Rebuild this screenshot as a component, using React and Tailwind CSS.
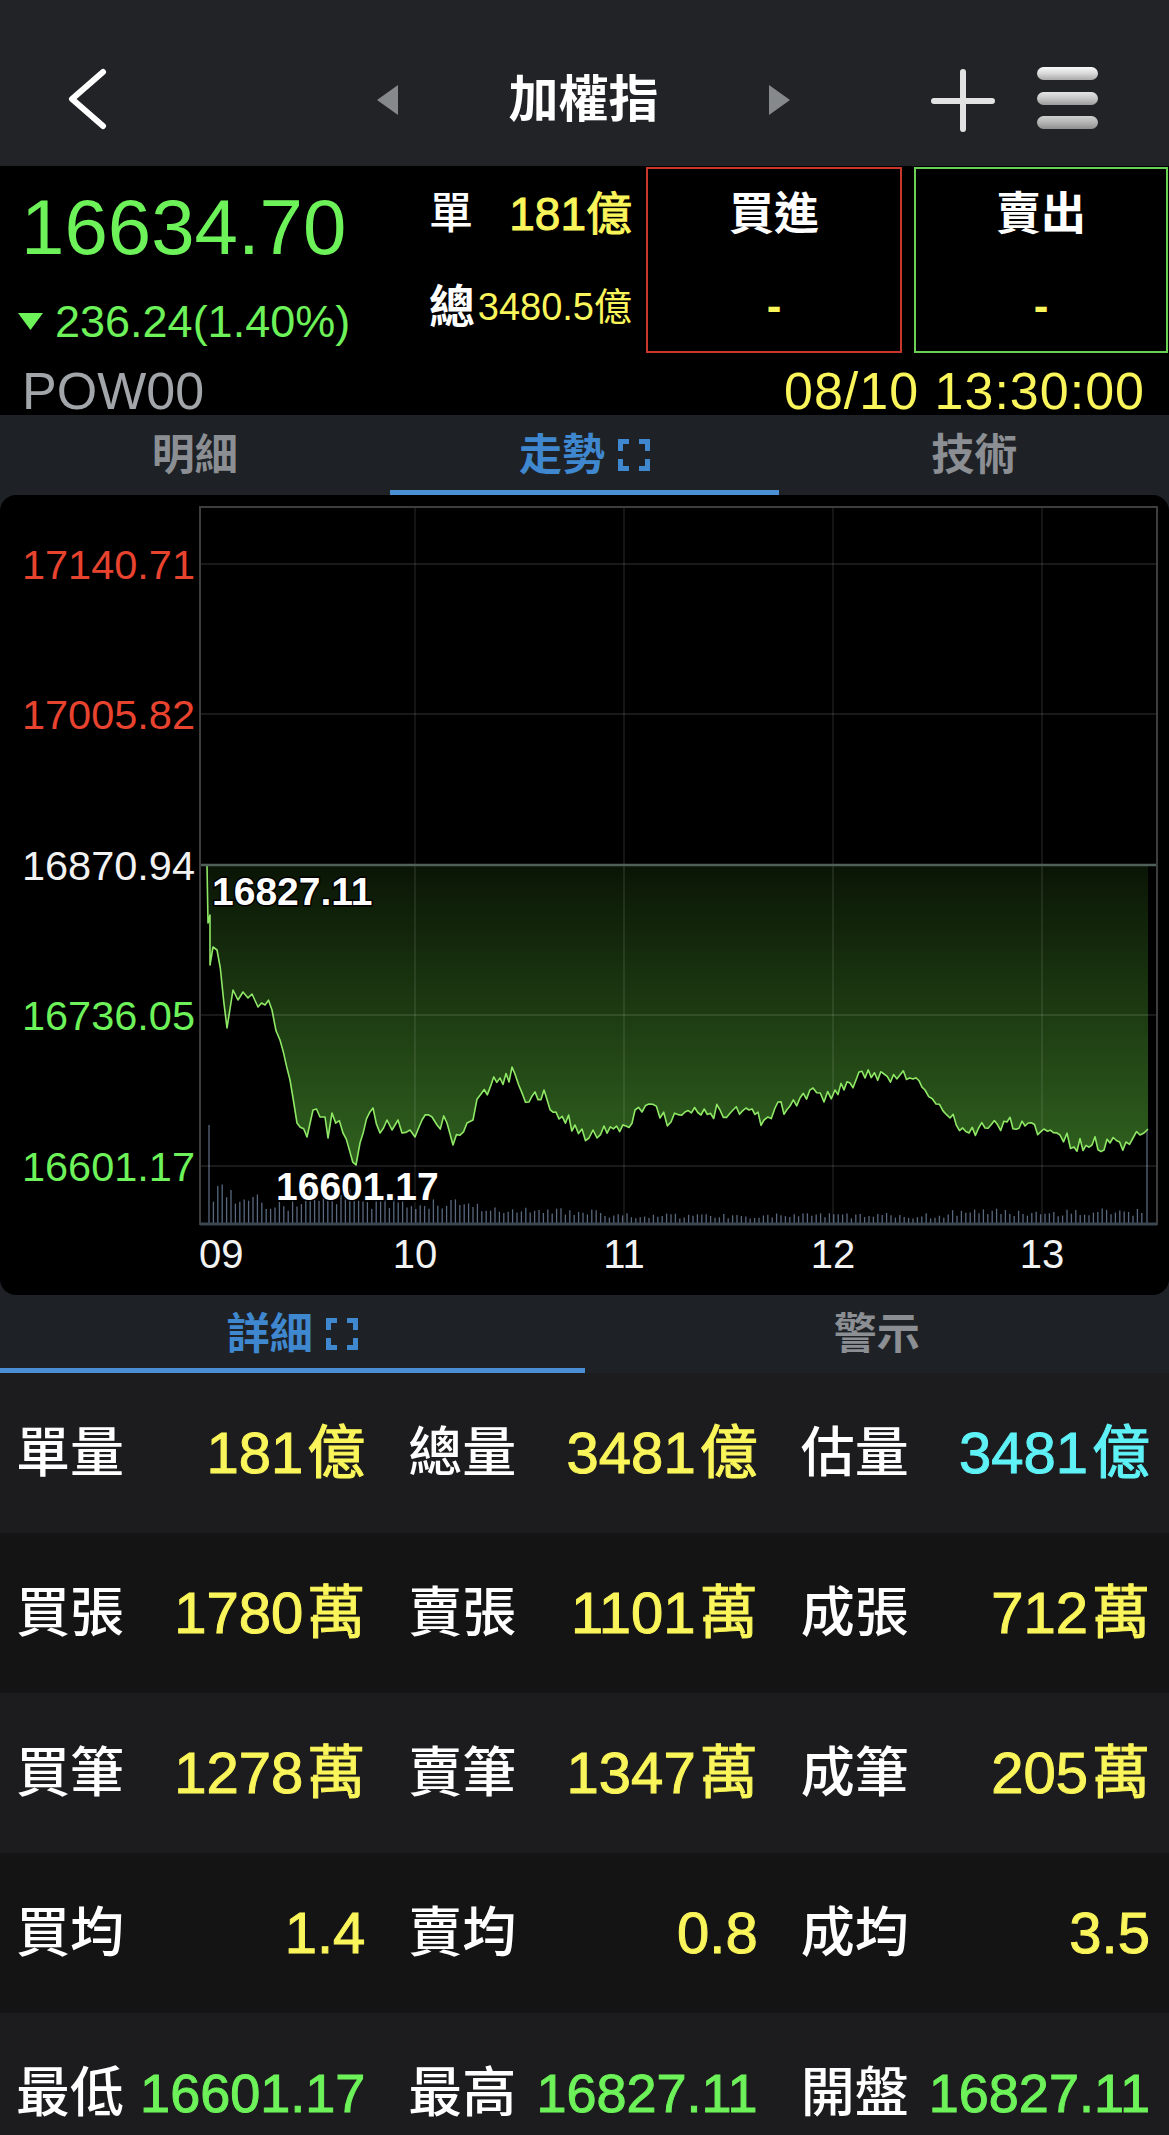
import React from "react";

const GREEN = "#6df25a";
const RED = "#e8432f";

// rough shape of the intraday line, in page pixels
const KEY = [
  [207, 865], [208, 923], [210, 915], [210, 965], [213, 947], [217, 950], [227, 1028],
  [233, 990], [238, 1000], [243, 992], [248, 998], [252, 994], [258, 1007], [265, 1005],
  [272, 1010], [280, 1040], [290, 1080], [297, 1123], [307, 1137], [313, 1110], [320, 1117],
  [325, 1117], [328, 1138], [332, 1113], [343, 1133], [356, 1165], [360, 1143], [373, 1108],
  [380, 1133], [387, 1120], [392, 1130], [398, 1120], [402, 1133], [410, 1130], [415, 1137],
  [422, 1120], [432, 1117], [437, 1125], [447, 1123], [453, 1145], [467, 1123], [473, 1120],
  [481, 1094], [500, 1078], [515, 1074], [529, 1102], [544, 1090], [559, 1119], [575, 1125],
  [589, 1138], [597, 1138], [604, 1126], [626, 1126], [635, 1110], [649, 1104], [660, 1118],
  [671, 1122], [685, 1112], [701, 1115], [720, 1110], [746, 1108], [764, 1120], [775, 1108],
  [790, 1106], [800, 1098], [813, 1088], [824, 1102], [835, 1090], [850, 1083], [865, 1078],
  [884, 1074], [900, 1075], [913, 1079], [925, 1090], [936, 1104], [950, 1118], [969, 1133],
  [985, 1128], [1007, 1122], [1025, 1126], [1044, 1129], [1060, 1135], [1074, 1147],
  [1092, 1145], [1110, 1143], [1126, 1142], [1140, 1135], [1148, 1129],
];

function seeded(seed) {
  let s = seed;
  return () => {
    s = (s * 16807) % 2147483647;
    return (s - 1) / 2147483646;
  };
}

function buildLine() {
  const r = seeded(11);
  const pts = [];
  for (let i = 0; i < KEY.length - 1; i++) {
    const [x1, y1] = KEY[i];
    const [x2, y2] = KEY[i + 1];
    const steps = Math.max(1, Math.floor((x2 - x1) / 3));
    for (let s = 0; s < steps; s++) {
      const t = s / steps;
      let y = y1 + (y2 - y1) * t;
      if (s > 0 && x2 - x1 > 6) y += (r() - 0.5) * 16;
      pts.push([x1 + (x2 - x1) * t, y]);
    }
  }
  pts.push(KEY[KEY.length - 1]);
  return pts;
}

function volumeEnvelope(x) {
  if (x < 212) return 98;
  if (x < 260) return 48 - (x - 212) * 0.4;
  if (x < 300) return 26;
  if (x < 360) return 38;
  if (x < 480) return 26;
  if (x < 600) return 16;
  if (x < 950) return 10;
  return 15;
}

function buildBars() {
  const r = seeded(5);
  const bars = [];
  for (let x = 209; x < 1142; x += 4.4) {
    const h = volumeEnvelope(x) * (x < 212 ? 1 : 0.45 + r() * 0.55);
    bars.push([x, h]);
  }
  bars.push([1147, 145]);
  return bars;
}

const LINE = buildLine();
const BARS = buildBars();

const Y_LABELS = [
  { v: "17140.71", y: 564, c: RED },
  { v: "17005.82", y: 714, c: RED },
  { v: "16870.94", y: 865, c: "#f2f2f2" },
  { v: "16736.05", y: 1015, c: GREEN },
  { v: "16601.17", y: 1166, c: GREEN },
];

const TIMES = [
  { t: "09", x: 199, a: "start" },
  { t: "10", x: 415, a: "middle" },
  { t: "11", x: 624, a: "middle" },
  { t: "12", x: 833, a: "middle" },
  { t: "13", x: 1042, a: "middle" },
];

function PriceChart() {
  const line = LINE.map(([x, y], i) => `${i ? "L" : "M"}${x.toFixed(1)} ${y.toFixed(1)}`).join(" ");
  const area = `${line} L1148 865 L207 865 Z`;
  const font = "Liberation Sans, Arial, sans-serif";

  return (
    <svg width="1169" height="800" viewBox="0 495 1169 800" className="block">
      <defs>
        <linearGradient id="fill" gradientUnits="userSpaceOnUse" x1="0" y1="865" x2="0" y2="1165">
          <stop offset="0" stopColor="#0a1505" />
          <stop offset="1" stopColor="#30621f" />
        </linearGradient>
      </defs>

      {BARS.map(([x, h], i) => (
        <line key={i} x1={x} x2={x} y1={1223} y2={1223 - h} stroke="#58687f" strokeWidth="1.3" />
      ))}

      <path d={area} fill="url(#fill)" />
      <path d={line} fill="none" stroke="#8fe865" strokeWidth="1.6" strokeLinejoin="round" />

      {[415, 624, 833, 1042].map((x) => (
        <line key={x} x1={x} x2={x} y1={507} y2={1223} stroke="rgba(255,255,255,0.14)" strokeWidth="1.2" />
      ))}
      {[564, 714, 1015, 1166].map((y) => (
        <line key={y} x1={200} x2={1157} y1={y} y2={y} stroke="rgba(255,255,255,0.2)" strokeWidth="1.2" />
      ))}
      <line x1={200} x2={1157} y1={865} y2={865} stroke="#4f605b" strokeWidth="2.5" />
      <rect x="200" y="507" width="957" height="717" fill="none" stroke="#3d3d3d" strokeWidth="2" />
      <line x1={200} x2={1157} y1={1224} y2={1224} stroke="#3b4650" strokeWidth="3" />

      {Y_LABELS.map((l) => (
        <text key={l.v} x="195" y={l.y + 15} textAnchor="end" fontFamily={font} fontSize="41.5" fill={l.c}>
          {l.v}
        </text>
      ))}
      {TIMES.map((t) => (
        <text key={t.t} x={t.x} y="1268" textAnchor={t.a} fontFamily={font} fontSize="40" fill="#f2f2f2">
          {t.t}
        </text>
      ))}

      <text x="212" y="905" fontFamily={font} fontSize="39" fontWeight="bold" fill="#ffffff"
        stroke="#000" strokeWidth="3" paintOrder="stroke">
        16827.11
      </text>
      <text x="276" y="1200" fontFamily={font} fontSize="39" fontWeight="bold" fill="#ffffff"
        stroke="#000" strokeWidth="3" paintOrder="stroke">
        16601.17
      </text>
    </svg>
  );
}

function ExpandIcon() {
  return (
    <svg width="32" height="32" viewBox="0 0 32 32" fill="none" stroke="currentColor" strokeWidth="5">
      <path d="M2.5 12V2.5H11M21 2.5H29.5V12M29.5 20V29.5H21M11 29.5H2.5V20" />
    </svg>
  );
}

function Header() {
  return (
    <div className="flex h-[166px] items-center bg-[#222326] pt-[34px]">
      <svg width="42" height="66" viewBox="0 0 42 66" className="ml-[66px] shrink-0">
        <polyline points="37,5 6,32 37,59" fill="none" stroke="#ffffff" strokeWidth="6" strokeLinecap="round" strokeLinejoin="round" />
      </svg>
      <svg width="21" height="30" viewBox="0 0 21 30" className="ml-[269px] shrink-0">
        <polygon points="21,0 0,15 21,30" fill="#85898c" />
      </svg>
      <div className="w-[371px] shrink-0 text-center text-[50px] font-bold leading-none text-white">加權指</div>
      <svg width="21" height="30" viewBox="0 0 21 30" className="shrink-0">
        <polygon points="0,0 21,15 0,30" fill="#85898c" />
      </svg>
      <svg width="64" height="64" viewBox="0 0 64 64" className="ml-[141px] shrink-0">
        <path d="M32 4V61M3 33H61" stroke="#e2e2e2" strokeWidth="6" strokeLinecap="round" />
      </svg>
      <svg width="66" height="70" viewBox="0 0 66 70" className="ml-[40px] shrink-0">
        <defs>
          <linearGradient id="bar" x1="0" y1="0" x2="0" y2="1">
            <stop offset="0" stopColor="#fafafa" />
            <stop offset="0.5" stopColor="#d8d8d8" />
            <stop offset="1" stopColor="#a9a9a9" />
          </linearGradient>
        </defs>
        <rect x="2" y="2" width="61" height="13" rx="6.5" fill="url(#bar)" />
        <rect x="2" y="27" width="61" height="13" rx="6.5" fill="url(#bar)" opacity="0.9" />
        <rect x="2" y="51" width="61" height="13" rx="6.5" fill="url(#bar)" opacity="0.8" />
      </svg>
    </div>
  );
}

function Quote() {
  return (
    <div className="h-[249px] bg-black">
      <div className="flex h-[187px]">
        <div className="flex w-[429px] shrink-0 flex-col pl-[21px] pt-[22px] text-[#6df25a]">
          <div className="text-[78px] leading-none">16634.70</div>
          <div className="mt-[33px] flex items-center text-[45px] leading-none">
            <svg width="25" height="17" viewBox="0 0 25 17" className="-ml-[3px]">
              <polygon points="0,0 25,0 12.5,17" fill="#6df25a" />
            </svg>
            <span className="ml-[12px]">236.24(1.40%)</span>
          </div>
        </div>

        <div className="flex w-[203px] shrink-0 flex-col pt-[18px]">
          <div className="flex h-[60px] items-center justify-between">
            <span className="text-[44px] font-medium leading-none text-white">單</span>
            <span className="text-[46px] leading-none text-[#faf55a] [-webkit-text-stroke:1px_#faf55a]">181億</span>
          </div>
          <div className="mt-[33px] flex h-[60px] items-center justify-between">
            <span className="text-[46px] font-bold leading-none text-white">總</span>
            <span className="text-[38px] leading-none text-[#faf55a]">3480.5億</span>
          </div>
        </div>

        <div className="ml-[14px] mt-[1px] flex h-[186px] w-[256px] shrink-0 flex-col items-center border-2 border-[#c9372c]">
          <span className="mt-[24px] text-[45px] font-bold leading-[44px] text-white">買進</span>
          <span className="mt-[49px] text-[44px] font-bold leading-[40px] text-[#faf55a]">-</span>
        </div>
        <div className="ml-[12px] mt-[1px] flex h-[186px] w-[254px] shrink-0 flex-col items-center border-2 border-[#69cf55]">
          <span className="mt-[24px] text-[45px] font-bold leading-[44px] text-white">賣出</span>
          <span className="mt-[49px] text-[44px] font-bold leading-[40px] text-[#faf55a]">-</span>
        </div>
      </div>

      <div className="flex h-[62px] items-baseline justify-between pl-[22px] pr-[24px] pt-[12px] leading-none">
        <span className="text-[52px] text-[#a2a6aa]">POW00</span>
        <span className="text-[52px] tracking-[1px] text-[#faf55a]">08/10 13:30:00</span>
      </div>
    </div>
  );
}

function TopTabs() {
  return (
    <div className="grid h-[80px] grid-cols-3 bg-[#1e2227] text-[43px] font-bold leading-none">
      <div className="flex items-center justify-center border-b-[5px] border-transparent pt-[5px] text-[#8b8e92]">明細</div>
      <div className="flex items-center justify-center gap-[13px] border-b-[5px] border-[#4a8ed3] pt-[5px] text-[#3f88cf]">
        走勢
        <ExpandIcon />
      </div>
      <div className="flex items-center justify-center border-b-[5px] border-transparent pt-[5px] text-[#8b8e92]">技術</div>
    </div>
  );
}

function BottomTabs() {
  return (
    <div className="grid h-[78px] grid-cols-2 bg-[#1e2227] text-[43px] font-bold leading-none">
      <div className="flex items-center justify-center gap-[13px] border-b-[5px] border-[#4a8ed3] pt-[5px] text-[#3f88cf]">
        詳細
        <ExpandIcon />
      </div>
      <div className="flex items-center justify-center border-b-[5px] border-transparent pt-[5px] text-[#8b8e92]">警示</div>
    </div>
  );
}

const Y = "text-[#faf55a]";
const C = "text-[#5ef2f7]";
const G = "text-[#6df25a]";

const ROWS = [
  [["單量", "181", "億", Y], ["總量", "3481", "億", Y], ["估量", "3481", "億", C]],
  [["買張", "1780", "萬", Y], ["賣張", "1101", "萬", Y], ["成張", "712", "萬", Y]],
  [["買筆", "1278", "萬", Y], ["賣筆", "1347", "萬", Y], ["成筆", "205", "萬", Y]],
  [["買均", "1.4", "", Y], ["賣均", "0.8", "", Y], ["成均", "3.5", "", Y]],
  [["最低", "16601.17", "", G], ["最高", "16827.11", "", G], ["開盤", "16827.11", "", G]],
];

function DataRow({ cells, dark, small }) {
  return (
    <div
      className={`grid h-[160px] shrink-0 grid-cols-3 items-center gap-x-[43px] pl-[16px] pr-[19px] ${
        dark ? "bg-[#141414]" : "bg-[#1c1c1e]"
      }`}
    >
      {cells.map(([label, num, unit, color]) => (
        <div key={label} className="flex items-center justify-between">
          <span className="text-[54px] font-medium leading-none text-white">{label}</span>
          <span
            className={`flex items-baseline leading-none [-webkit-text-stroke:1px_currentColor] ${
              small ? "text-[54px]" : "text-[58px]"
            } ${color}`}
          >
            {num}
            {unit && <span className="ml-[4px]">{unit}</span>}
          </span>
        </div>
      ))}
    </div>
  );
}

export default function App() {
  return (
    <div className="h-[2135px] w-[1169px] overflow-hidden bg-[#1e2227] font-['Liberation_Sans','Noto_Sans_CJK_TC',sans-serif]">
      <Header />
      <Quote />
      <TopTabs />
      <div className="h-[800px] overflow-hidden rounded-[16px] bg-black">
        <PriceChart />
      </div>
      <BottomTabs />
      {ROWS.map((cells, i) => (
        <DataRow key={i} cells={cells} dark={i % 2 === 1} small={i === 4} />
      ))}
    </div>
  );
}
